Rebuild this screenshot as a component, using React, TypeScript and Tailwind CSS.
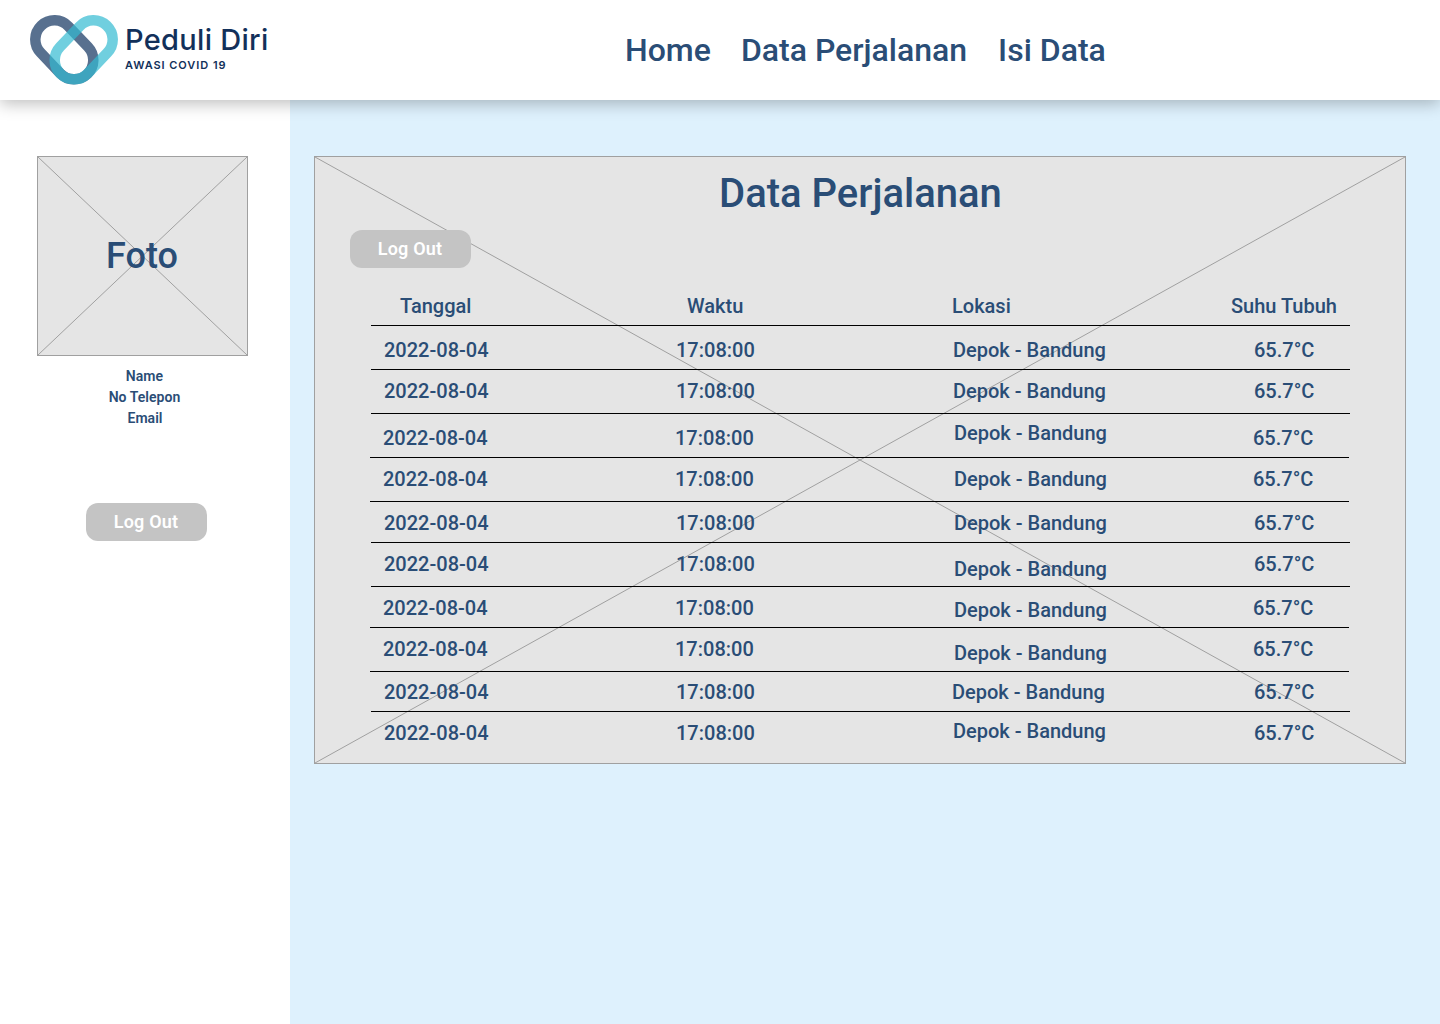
type Row = {
  shift: string;
  height: string;
  top: string;
  place: string;
};

const rows: Row[] = [
  { shift: "", height: "h-[44px] border-b", top: "pt-[12px]", place: "pl-[1px] mt-0" },
  { shift: "", height: "h-[44px] border-b", top: "pt-[9px]", place: "pl-[1px] mt-0" },
  { shift: "-ml-px mr-px", height: "h-[44px] border-b", top: "pt-[12px]", place: "pl-[3px] -mt-[5px]" },
  { shift: "-ml-px mr-px", height: "h-[44px] border-b", top: "pt-[9px]", place: "pl-[3px] mt-0" },
  { shift: "", height: "h-[41px] border-b", top: "pt-[9px]", place: "pl-[2px] mt-0" },
  { shift: "", height: "h-[44px] border-b", top: "pt-[9px]", place: "pl-[2px] mt-[5px]" },
  { shift: "-ml-px mr-px", height: "h-[41px] border-b", top: "pt-[9px]", place: "pl-[3px] mt-[2px]" },
  { shift: "-ml-px mr-px", height: "h-[44px] border-b", top: "pt-[9px]", place: "pl-[3px] mt-[4px]" },
  { shift: "", height: "h-[40px] border-b", top: "pt-[8px]", place: "pl-0 mt-0" },
  { shift: "", height: "h-[44px]", top: "pt-[9px]", place: "pl-[1px] -mt-[2px]" },
];

function Cross() {
  return (
    <svg className="pointer-events-none absolute inset-0 h-full w-full" aria-hidden="true">
      <line x1="0" y1="0" x2="100%" y2="100%" stroke="#a0a0a0" />
      <line x1="100%" y1="0" x2="0" y2="100%" stroke="#a0a0a0" />
    </svg>
  );
}

function Logo() {
  return (
    <div className="flex w-[260px] pl-[30px] pt-[15px]">
      <svg width="88" height="70" viewBox="30 15 88 70" fill="none" strokeWidth="10.5" className="shrink-0">
        <rect x="35.3" y="20.3" width="66.8" height="38.4" rx="19.2" transform="rotate(46.4 54.5 39.5)" stroke="#58708f" />
        <rect x="45.9" y="20.3" width="66.8" height="38.4" rx="19.2" transform="rotate(-46.4 93.5 39.5)" stroke="#33bad1" strokeOpacity="0.7" />
      </svg>
      <div className='ml-[7px] whitespace-nowrap font-["Inter",sans-serif] text-[#12305a]'>
        <div className="mt-[6px] text-[29px] font-[450] leading-[38px] tracking-[0.3px]">Peduli Diri</div>
        <div className="-mt-px text-[11px] font-semibold leading-[14px] tracking-[0.95px]">AWASI COVID 19</div>
      </div>
    </div>
  );
}

function LogOut() {
  return (
    <button className="block h-[38px] w-[121px] rounded-[12px] bg-[#c4c4c4] pr-px text-[18px] font-semibold leading-[38px] tracking-[0.18px] text-white">
      Log Out
    </button>
  );
}

export default function App() {
  return (
    <div className='flex h-[1024px] w-[1440px] flex-col overflow-hidden bg-white font-["Roboto",sans-serif] font-medium text-[#2a4d76]'>
      <header className="relative z-10 flex h-[100px] shrink-0 bg-white shadow-[0_4px_15px_rgba(0,0,0,0.25)]">
        <Logo />
        <nav className="ml-[365px] flex gap-[30px] whitespace-nowrap pt-[31px] text-[32px] leading-[38px]">
          <a>Home</a>
          <a>Data Perjalanan</a>
          <a className="ml-px">Isi Data</a>
        </nav>
      </header>

      <div className="flex flex-1">
        <aside className="w-[290px] shrink-0 bg-white pt-[56px]">
          <div className="relative ml-[37px] flex h-[200px] w-[211px] items-center justify-center border border-[#a0a0a0] bg-[#e5e5e5]">
            <Cross />
            <span className="relative pr-px text-[36px] leading-[42px]">Foto</span>
          </div>
          <div className="mt-[10px] w-[289px] text-center text-[14px] font-semibold leading-[21px] tracking-[0.05px]">
            <p>Name</p>
            <p>No Telepon</p>
            <p className="pl-px">Email</p>
          </div>
          <div className="ml-[86px] mt-[74px]">
            <LogOut />
          </div>
        </aside>

        <main className="flex-1 bg-[#def1fd] pl-[24px] pt-[56px]">
          <section className="relative h-[608px] w-[1092px] border border-[#a0a0a0] bg-[#e5e5e5]">
            <Cross />
            <div className="relative">
              <h1 className="pl-px pt-[13px] text-center text-[40px] leading-[47px]">Data Perjalanan</h1>
              <div className="ml-[35px] mt-[13px]">
                <LogOut />
              </div>
              <div className="ml-[56px] mt-[26px] w-[979px] whitespace-nowrap text-[20px] leading-[24px]">
                <div className="flex h-[32px] border-b border-black">
                  <span className="w-[316px] pl-[29px]">Tanggal</span>
                  <span className="w-[265px]">Waktu</span>
                  <span className="w-[279px]">Lokasi</span>
                  <span>Suhu Tubuh</span>
                </div>
                {rows.map((row, i) => (
                  <div key={i} className={`flex border-black ${row.shift} ${row.height} ${row.top}`}>
                    <span className="w-[305px] pl-[13px]">2022-08-04</span>
                    <span className="w-[276px]">17:08:00</span>
                    <span className={`w-[302px] ${row.place}`}>Depok - Bandung</span>
                    <span>65.7°C</span>
                  </div>
                ))}
              </div>
            </div>
          </section>
        </main>
      </div>
    </div>
  );
}
